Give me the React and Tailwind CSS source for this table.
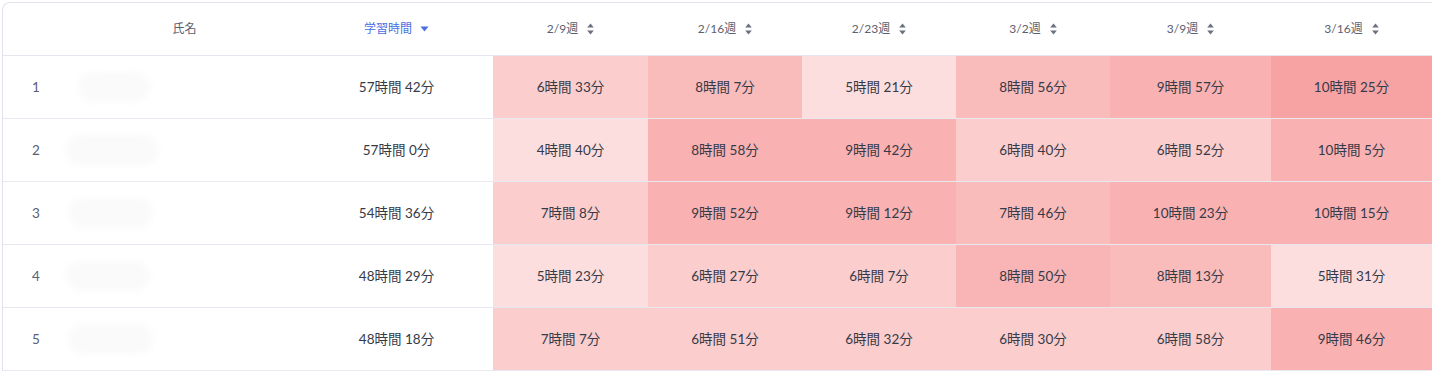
const weeks = ["2/9週", "2/16週", "2/23週", "3/2週", "3/9週", "3/16週"];

const rows = [
  {
    no: 1,
    total: "57時間 42分",
    pill: "ml-[9px] w-[72px]",
    cells: [
      ["6時間 33分", "bg-[#fbcdcd]"],
      ["8時間 7分", "bg-[#fabbbb]"],
      ["5時間 21分", "bg-[#fddede]"],
      ["8時間 56分", "bg-[#fabbbb]"],
      ["9時間 57分", "bg-[#f9b1b1]"],
      ["10時間 25分", "bg-[#f7a3a3]"],
    ],
  },
  {
    no: 2,
    total: "57時間 0分",
    pill: "ml-[-4px] w-[94px]",
    cells: [
      ["4時間 40分", "bg-[#fddede]"],
      ["8時間 58分", "bg-[#f9b1b1]"],
      ["9時間 42分", "bg-[#f9b1b1]"],
      ["6時間 40分", "bg-[#fbcdcd]"],
      ["6時間 52分", "bg-[#fbcdcd]"],
      ["10時間 5分", "bg-[#f9b1b1]"],
    ],
  },
  {
    no: 3,
    total: "54時間 36分",
    pill: "ml-[-1px] w-[85px]",
    cells: [
      ["7時間 8分", "bg-[#fbcdcd]"],
      ["9時間 52分", "bg-[#f9b1b1]"],
      ["9時間 12分", "bg-[#f9b1b1]"],
      ["7時間 46分", "bg-[#fabbbb]"],
      ["10時間 23分", "bg-[#f9b1b1]"],
      ["10時間 15分", "bg-[#f9b1b1]"],
    ],
  },
  {
    no: 4,
    total: "48時間 29分",
    pill: "ml-[-3px] w-[84px]",
    cells: [
      ["5時間 23分", "bg-[#fddede]"],
      ["6時間 27分", "bg-[#fbcdcd]"],
      ["6時間 7分", "bg-[#fbcdcd]"],
      ["8時間 50分", "bg-[#f9b5b5]"],
      ["8時間 13分", "bg-[#fabbbb]"],
      ["5時間 31分", "bg-[#fddede]"],
    ],
  },
  {
    no: 5,
    total: "48時間 18分",
    pill: "ml-[-1px] w-[85px]",
    cells: [
      ["7時間 7分", "bg-[#fbcdcd]"],
      ["6時間 51分", "bg-[#fbcdcd]"],
      ["6時間 32分", "bg-[#fbcdcd]"],
      ["6時間 30分", "bg-[#fbcdcd]"],
      ["6時間 58分", "bg-[#fbcdcd]"],
      ["9時間 46分", "bg-[#f9b1b1]"],
    ],
  },
];

const cols =
  "grid grid-cols-[66px_231px_193px_155px_154px_154px_154px_161px_161px]";

function SortIcon() {
  return (
    <svg width="7" height="12" viewBox="0 0 7 12" className="ml-[9px]">
      <path d="M3.5 0.5L6.8 4.5H0.2Z" fill="#6b7080" />
      <path d="M3.5 11.5L6.8 7.5H0.2Z" fill="#6b7080" />
    </svg>
  );
}

export default function App() {
  return (
    <div
      className="w-[1432px] h-[371px] bg-white overflow-hidden pl-[2px] pt-[2px]"
      style={{ fontFamily: "Lato, 'Noto Sans CJK JP', sans-serif" }}
    >
      <div className="w-[1500px] border-l border-t border-[#e2e2ee] rounded-tl-[8px] bg-white">
        {/* Header */}
        <div className={`${cols} h-[53px] border-b border-[#e6e6ee] text-[12px] text-[#5c6070]`}>
          <div />
          <div className="flex items-center justify-center">氏名</div>
          <div className="flex items-center justify-center text-[#4a6ee6]">
            <span>学習時間</span>
            <svg width="9" height="6" viewBox="0 0 9 6" className="ml-[8px]">
              <path d="M0.5 0.5H8.5L4.5 5.5Z" fill="#4a6ee6" />
            </svg>
          </div>
          {weeks.map((w) => (
            <div key={w} className="flex items-center justify-center">
              <span>{w}</span>
              <SortIcon />
            </div>
          ))}
        </div>

        {/* Rows */}
        {rows.map((r) => (
          <div
            key={r.no}
            className={`${cols} h-[63px] border-b border-[#e8e8f0] text-[13.5px] text-[#353a48]`}
          >
            <div className="flex items-center justify-center text-[#5a6075]">
              {r.no}
            </div>
            <div className="flex items-center">
              <div
                className={`h-[30px] rounded-full bg-[#fafafa] blur-[3px] ${r.pill}`}
              />
            </div>
            <div className="flex items-center justify-center">{r.total}</div>
            {r.cells.map(([t, bg], i) => (
              <div key={i} className={`flex items-center justify-center ${bg}`}>
                {t}
              </div>
            ))}
          </div>
        ))}
      </div>
    </div>
  );
}
